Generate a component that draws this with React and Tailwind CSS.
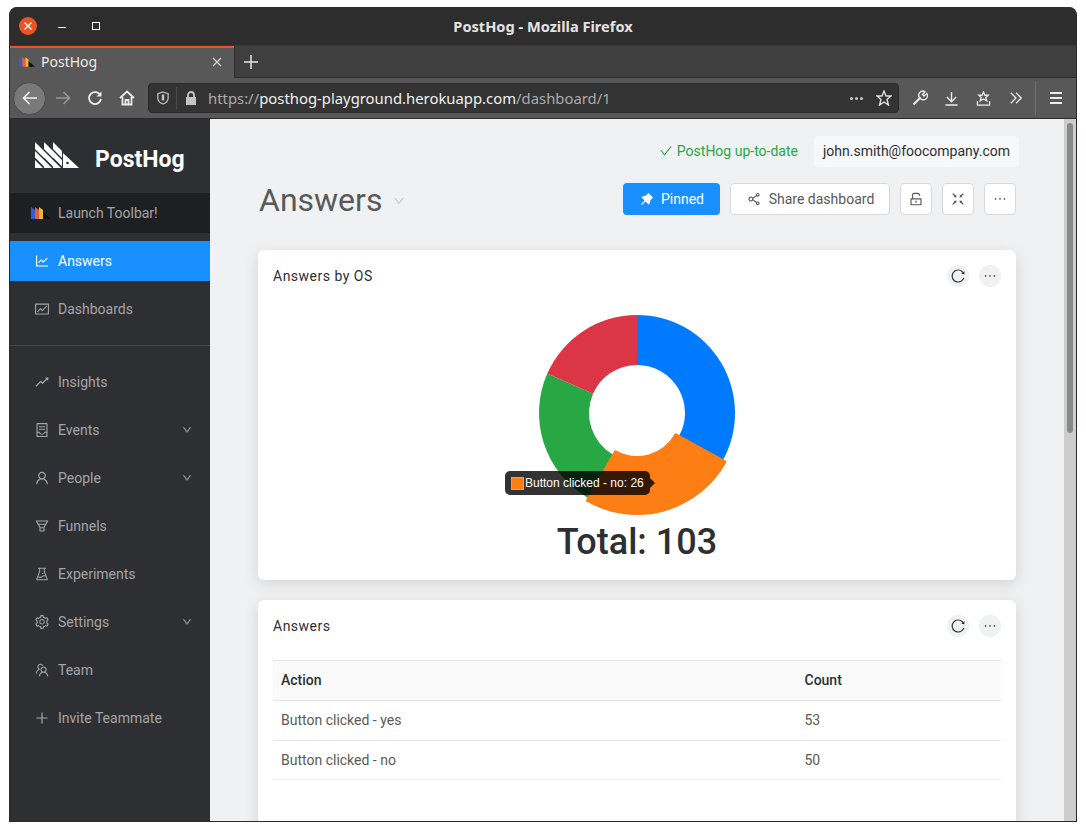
import {
  AiOutlineLineChart,
  AiOutlineFund,
  AiOutlineRise,
  AiOutlineContainer,
  AiOutlineUser,
  AiOutlineFunnelPlot,
  AiOutlineExperiment,
  AiOutlineSetting,
  AiOutlineTeam,
  AiOutlinePlus,
  AiOutlineDown,
  AiFillPushpin,
  AiOutlineShareAlt,
  AiOutlineUnlock,
  AiOutlineFullscreenExit,
  AiOutlineEllipsis,
  AiOutlineReload,
  AiOutlineCheck,
} from "react-icons/ai";

const CX = 100;
const CY = 100;

const polar = (r, deg) => {
  const a = ((deg - 90) * Math.PI) / 180;
  return [CX + r * Math.cos(a), CY + r * Math.sin(a)];
};

const arc = (r0, r1, start, end) => {
  const [x0, y0] = polar(r1, start);
  const [x1, y1] = polar(r1, end);
  const [x2, y2] = polar(r0, end);
  const [x3, y3] = polar(r0, start);
  const large = end - start > 180 ? 1 : 0;
  return `M${x0} ${y0}A${r1} ${r1} 0 ${large} 1 ${x1} ${y1}L${x2} ${y2}A${r0} ${r0} 0 ${large} 0 ${x3} ${y3}Z`;
};

const Favicon = ({ className }) => (
  <svg viewBox="0 0 20 12" className={className}>
    <path d="M0 0 L4 3 V12 H0Z" fill="#2f5fd8" />
    <path d="M4 0 L8 3 V12 H4Z" fill="#e2603a" />
    <path d="M8 0 L12 3 V12 H8Z" fill="#f2b632" />
    <path d="M12 5 L20 12 H12Z" fill="#0c0c0c" />
  </svg>
);

const Logo = () => (
  <svg viewBox="0 0 44 26" className="w-[44px] h-[26px]">
    <g fill="#fff">
      <path d="M0 0 L9 9 V16 L0 7Z" />
      <path d="M0 9 L9 18 V24.5 L0 15.5Z" />
      <path d="M0 18 L8 26 H0Z" />
      <path d="M9 0 L18 9 V16 L9 7Z" />
      <path d="M9 9 L18 18 V24.5 L9 15.5Z" />
      <path d="M9 18 L17 26 H9Z" />
      <path d="M18 0 L27 9 V16 L18 7Z" />
      <path d="M18 9 L27 18 V24.5 L18 15.5Z" />
      <path d="M18 18 L26 26 H18Z" />
      <path d="M28 11 L44 26 H28Z" />
    </g>
    <circle cx="32.5" cy="21" r="1.3" fill="#2d2f33" />
  </svg>
);

const NavItem = ({ icon: Icon, label, caret, active }) => (
  <div
    className={`flex items-center h-10 pl-6 pr-[18px] text-sm ${
      active ? "bg-[#1890ff] text-white" : "text-[#a3a5a8]"
    }`}
  >
    <Icon className="w-4 h-4 mr-2" />
    <span className="flex-1">{label}</span>
    {caret && <AiOutlineDown className="w-[10px] h-[10px] stroke-[40px]" />}
  </div>
);

const IconBtn = ({ icon: Icon }) => (
  <div className="w-8 h-8 flex items-center justify-center bg-white border border-[#d9d9d9] rounded-sm text-[#595959]">
    <Icon className="w-4 h-4" />
  </div>
);

const CardHead = ({ title }) => (
  <div className="flex items-center justify-between h-[52px] pl-[15px] pr-[15px]">
    <span className="text-sm tracking-[0.5px] text-[#2d2f33]">{title}</span>
    <div className="flex gap-[10px]">
      <span className="w-[22px] h-[22px] rounded-full bg-[#f0f1f3] flex items-center justify-center text-[#333]">
        <AiOutlineReload className="w-4 h-4" />
      </span>
      <span className="w-[22px] h-[22px] rounded-full bg-[#f0f1f3] flex items-center justify-center text-[#555]">
        <AiOutlineEllipsis className="w-4 h-4" />
      </span>
    </div>
  </div>
);

const Chrome = () => (
  <div className="font-['Noto_Sans',sans-serif]">
    <div className="relative h-[38px] pt-[2px] bg-[#2d2d2d] rounded-t-[8px] flex items-center justify-center">
      <span className="text-[14.6px] font-bold text-[#e4e4e4]">PostHog - Mozilla Firefox</span>
      <span className="absolute left-[9px] top-[10px] w-[18px] h-[18px] rounded-full bg-[#e95420] flex items-center justify-center">
        <svg viewBox="0 0 10 10" className="w-[10px] h-[10px]">
          <path d="M1.5 1.5 L8.5 8.5 M8.5 1.5 L1.5 8.5" stroke="#fff" strokeWidth="1.2" />
        </svg>
      </span>
      <span className="absolute left-[48px] top-[20px] w-2 h-px bg-white" />
      <span className="absolute left-[82px] top-[15px] w-2 h-2 border border-white" />
    </div>
    <div className="flex h-[33px] bg-[#3f3f3f] border-t border-[#383838]">
      <div className="w-[224px] h-[32px] bg-[#585858] border-t-2 border-[#e95420] flex items-center pl-[9px] pb-[2px] text-[#ececec]">
        <Favicon className="w-[16px] h-[10px] mr-[6px]" />
        <span className="text-sm flex-1">PostHog</span>
        <svg viewBox="0 0 12 12" className="w-[12px] h-[12px] mr-[11px]">
          <path d="M2 2 L10 10 M10 2 L2 10" stroke="#d8d8d8" strokeWidth="1.2" />
        </svg>
      </div>
      <div className="w-[33px] flex items-center justify-center border-l border-[#2d2d2d] border-b">
        <svg viewBox="0 0 14 14" className="w-[14px] h-[14px]">
          <path d="M7 0 V14 M0 7 H14" stroke="#e8e8e8" strokeWidth="1.5" />
        </svg>
      </div>
      <div className="flex-1 border-b border-[#2d2d2d]" />
    </div>
    <div className="flex items-center h-[41px] bg-[#585858] border-b border-[#2a2a2a] pl-[4px] text-[#e4e4e4]">
      <span className="w-[33px] h-[33px] -ml-px rounded-full bg-[#797979] border border-[#4a4a4a] flex items-center justify-center">
        <svg viewBox="0 0 16 16" className="w-[16px] h-[16px]" fill="none" stroke="#f2f2f2" strokeWidth="1.6">
          <path d="M15 8 H1.5 M7.5 2 L1.5 8 L7.5 14" />
        </svg>
      </span>
      <svg viewBox="0 0 16 16" className="w-[16px] h-[16px] ml-[9px]" fill="none" stroke="#959595" strokeWidth="1.6">
        <path d="M1 8 H14.5 M8.5 2 L14.5 8 L8.5 14" />
      </svg>
      <svg viewBox="0 0 16 16" className="w-[16px] h-[16px] ml-[16px]" fill="none" stroke="#ececec" strokeWidth="1.8">
        <path d="M13.5 5.5 A6 6 0 1 0 14 9" />
        <path d="M14.5 1.5 V6.5 H9.5" fill="#ececec" stroke="none" />
      </svg>
      <svg viewBox="0 0 16 16" className="w-[16px] h-[16px] ml-[16px]" fill="none" stroke="#ececec" strokeWidth="1.8">
        <path d="M1 8 L8 1.5 L15 8 M3.5 7 V14.5 H12.5 V7" />
        <path d="M6.5 14.5 V10 H9.5 V14.5" />
      </svg>
      <div className="flex items-center h-[30px] w-[751px] ml-[13px] bg-[#333333] border border-[#2a2a2a] rounded-[4px] pl-[8px] pr-[6px]">
        <svg viewBox="0 0 14 16" className="w-[12px] h-[14px] shrink-0" fill="none" stroke="#c0c0c0" strokeWidth="1.5">
          <path d="M7 1 L13 3 V8 C13 12 10 14 7 15 C4 14 1 12 1 8 V3Z" />
          <path d="M7 4 V11" strokeWidth="3" />
        </svg>
        <span className="w-px h-[22px] bg-[#484848] ml-[7px] mr-[7px]" />
        <svg viewBox="0 0 14 16" className="w-[14px] h-[16px] shrink-0" fill="#c4c4c4">
          <path d="M2 7 H12 V15 H2Z" />
          <path d="M4 7 V5 A3 3 0 0 1 10 5 V7" fill="none" stroke="#c4c4c4" strokeWidth="1.8" />
        </svg>
        <span className="ml-[10px] text-[14.85px] flex-1 whitespace-nowrap text-[#ababab]">
          https://<span className="text-[#f2f2f2]">posthog-playground.herokuapp.com</span>/dashboard/1
        </span>
        <span className="flex gap-[2px] mr-[13px]">
          <i className="w-[3px] h-[3px] rounded-full bg-[#c8c8c8]" />
          <i className="w-[3px] h-[3px] rounded-full bg-[#c8c8c8]" />
          <i className="w-[3px] h-[3px] rounded-full bg-[#c8c8c8]" />
        </span>
        <svg viewBox="0 0 16 16" className="w-[16px] h-[16px]" fill="none" stroke="#e0e0e0" strokeWidth="1.4">
          <path d="M8 1 L10 6 H15 L11 9.5 L12.5 15 L8 12 L3.5 15 L5 9.5 L1 6 H6Z" />
        </svg>
      </div>
      <svg viewBox="0 0 16 16" className="w-[16px] h-[16px] ml-[13px]" fill="none" stroke="#ececec" strokeWidth="2">
        <path d="M1.5 14.5 L8.5 7.5" />
        <path d="M8 8 A4 4 0 0 1 13 1.8 L10.5 4.5 L12 6 L14.8 3.5 A4 4 0 0 1 8 8Z" strokeWidth="1.4" />
      </svg>
      <svg viewBox="0 0 16 16" className="w-[15px] h-[15px] ml-[16px]" fill="none" stroke="#ececec" strokeWidth="1.5">
        <path d="M8 1 V11 M3 6.5 L8 11.5 L13 6.5 M1.5 15 H14.5" />
      </svg>
      <svg viewBox="0 0 16 16" className="w-[15px] h-[15px] ml-[17px]" fill="none" stroke="#ececec" strokeWidth="1.4">
        <path d="M8 1 L9.5 4.5 H13 L10.5 7 L11.5 10.5 L8 8.5 L4.5 10.5 L5.5 7 L3 4.5 H6.5Z" />
        <path d="M1.5 11 V15 H14.5 V11" />
      </svg>
      <svg viewBox="0 0 16 16" className="w-[14px] h-[14px] ml-[18px]" fill="none" stroke="#ececec" strokeWidth="1.5">
        <path d="M2 2 L8 8 L2 14 M8 2 L14 8 L8 14" />
      </svg>
      <span className="w-px h-[34px] bg-[#707070] ml-[12px]" />
      <span className="flex flex-col gap-[3px] ml-[14px]">
        <i className="w-3 h-[2px] bg-[#ececec]" />
        <i className="w-3 h-[2px] bg-[#ececec]" />
        <i className="w-3 h-[2px] bg-[#ececec]" />
      </span>
    </div>
  </div>
);

const Sidebar = () => (
  <aside className="w-[200px] shrink-0 bg-[#2d2f33] font-['Roboto',sans-serif]">
    <div className="relative flex h-[74px] pl-[25px] pt-[23px]">
      <Logo />
      <span className="absolute left-[85px] top-[26px] text-[23px] leading-[30px] font-bold text-white">PostHog</span>
    </div>
    <div className="flex items-center h-10 pl-[21px] bg-[#1d1f22] text-sm text-[#a3a5a8]">
      <Favicon className="w-[20px] h-[12px] mr-[7px]" />
      Launch Toolbar!
    </div>
    <div className="h-2" />
    <NavItem icon={AiOutlineLineChart} label="Answers" active />
    <div className="h-2" />
    <NavItem icon={AiOutlineFund} label="Dashboards" />
    <div className="h-4" />
    <div className="border-t border-[#45474b] mb-4" />
    <div className="flex flex-col gap-2">
      <NavItem icon={AiOutlineRise} label="Insights" />
      <NavItem icon={AiOutlineContainer} label="Events" caret />
      <NavItem icon={AiOutlineUser} label="People" caret />
      <NavItem icon={AiOutlineFunnelPlot} label="Funnels" />
      <NavItem icon={AiOutlineExperiment} label="Experiments" />
      <NavItem icon={AiOutlineSetting} label="Settings" caret />
      <NavItem icon={AiOutlineTeam} label="Team" />
      <NavItem icon={AiOutlinePlus} label="Invite Teammate" />
    </div>
  </aside>
);

const Donut = () => (
  <div className="relative w-[200px] h-[200px]">
    <svg viewBox="0 0 200 200" className="w-[200px] h-[200px]" style={{ overflow: "visible" }}>
      <path d={arc(48, 98, 0, 118.8)} fill="#007bff" />
      <path d={arc(48, 98, 209.7, 293.7)} fill="#28a745" />
      <path d={arc(48, 98, 293.7, 360)} fill="#dc3545" />
      <path d={arc(44, 101, 118.8, 209.7)} fill="#fd7e14" stroke="#fd7e14" strokeWidth="2" strokeLinejoin="round" />
    </svg>
    <div className="absolute left-[-32px] top-[158px] h-[24px] w-[145px] rounded-[5px] bg-black/80 flex items-center pl-[6px] text-xs text-white font-['Liberation_Sans',sans-serif] whitespace-nowrap">
      <span className="w-[13px] h-[13px] bg-[#fd7e14] border border-[#ff9a45] mr-px" />
      Button clicked - no: 26
      <span className="absolute right-[-5px] top-[7px] border-y-[5px] border-y-transparent border-l-[5px] border-l-black/80" />
    </div>
  </div>
);

const Content = () => (
  <main className="flex-1 min-w-0 bg-[#f0f1f3] overflow-hidden pl-[48px] pr-[48px] font-['Roboto',sans-serif]">
    <div className="flex items-center justify-end h-[32px] mt-[16px]">
      <AiOutlineCheck className="w-[14px] h-[14px] text-[#28a745] mr-[4px]" />
      <span className="text-sm text-[#28a745]">PostHog up-to-date</span>
      <span className="ml-[16px] mr-[-3px] h-[31px] px-[9px] flex items-center bg-[#f7f8fa] rounded-sm text-sm text-[#2d2f33]">
        john.smith@foocompany.com
      </span>
    </div>
    <div className="flex items-center mt-[16px] h-[32px]">
      <h1 className="text-[32px] text-[#595959] leading-none ml-px translate-y-[1px]">Answers</h1>
      <AiOutlineDown className="w-[12px] h-[12px] ml-[11px] text-[#bfbfbf] mt-[3px]" />
      <div className="flex-1" />
      <div className="h-8 w-[97px] flex items-center justify-center gap-[6px] bg-[#1890ff] rounded-sm text-sm text-white">
        <AiFillPushpin className="w-4 h-4" />
        Pinned
      </div>
      <div className="ml-[10px] h-8 w-[160px] flex items-center justify-center gap-[7px] bg-white border border-[#d9d9d9] rounded-sm text-sm text-[#595959]">
        <AiOutlineShareAlt className="w-4 h-4" />
        Share dashboard
      </div>
      <div className="flex gap-[10px] ml-[10px]">
        <IconBtn icon={AiOutlineUnlock} />
        <IconBtn icon={AiOutlineFullscreenExit} />
        <IconBtn icon={AiOutlineEllipsis} />
      </div>
    </div>
    <section className="mt-[35px] h-[330px] bg-white rounded-[6px] shadow-[0_4px_16px_rgba(0,0,0,0.12)] flex flex-col">
      <CardHead title="Answers by OS" />
      <div className="flex justify-center mt-[11px]">
        <Donut />
      </div>
      <div className="text-center text-[36px] font-medium text-[#2d2f33] leading-none mt-[11px]">Total: 103</div>
    </section>
    <section className="mt-[20px] h-[260px] bg-white rounded-[6px] shadow-[0_4px_16px_rgba(0,0,0,0.12)]">
      <CardHead title="Answers" />
      <div className="mx-[15px] mt-[8px] text-sm">
        <div className="flex items-center h-[41px] pb-[2px] bg-[#fafafa] border-y border-[#e4e5e9] font-medium text-[#2d2f33] pl-[8px]">
          <span className="w-[523.5px]">Action</span>
          <span>Count</span>
        </div>
        <div className="flex items-center h-[40px] pb-[2px] border-b border-[#e4e5e9] text-[#595959] pl-[8px]">
          <span className="w-[523.5px]">Button clicked - yes</span>
          <span>53</span>
        </div>
        <div className="flex items-center h-[39px] border-b border-[#eceded] text-[#595959] pl-[8px]">
          <span className="w-[523.5px]">Button clicked - no</span>
          <span>50</span>
        </div>
      </div>
    </section>
  </main>
);

const Scrollbar = () => (
  <div className="w-[12px] shrink-0 bg-[#cdcdcd] pt-[4px] flex justify-center">
    <div className="w-[6px] h-[310px] rounded-full bg-[#868a89]" />
  </div>
);

export default function App() {
  return (
    <div className="w-[1086px] h-[831px] bg-white pt-[7px] pl-[9px] overflow-hidden">
      <div className="w-[1068px] h-[815px] bg-[#2d2d2d] border-x border-b border-[#2a2a2a] rounded-t-[8px] flex flex-col overflow-hidden">
        <Chrome />
        <div className="flex flex-1 min-h-0">
          <Sidebar />
          <Content />
          <Scrollbar />
        </div>
      </div>
    </div>
  );
}
